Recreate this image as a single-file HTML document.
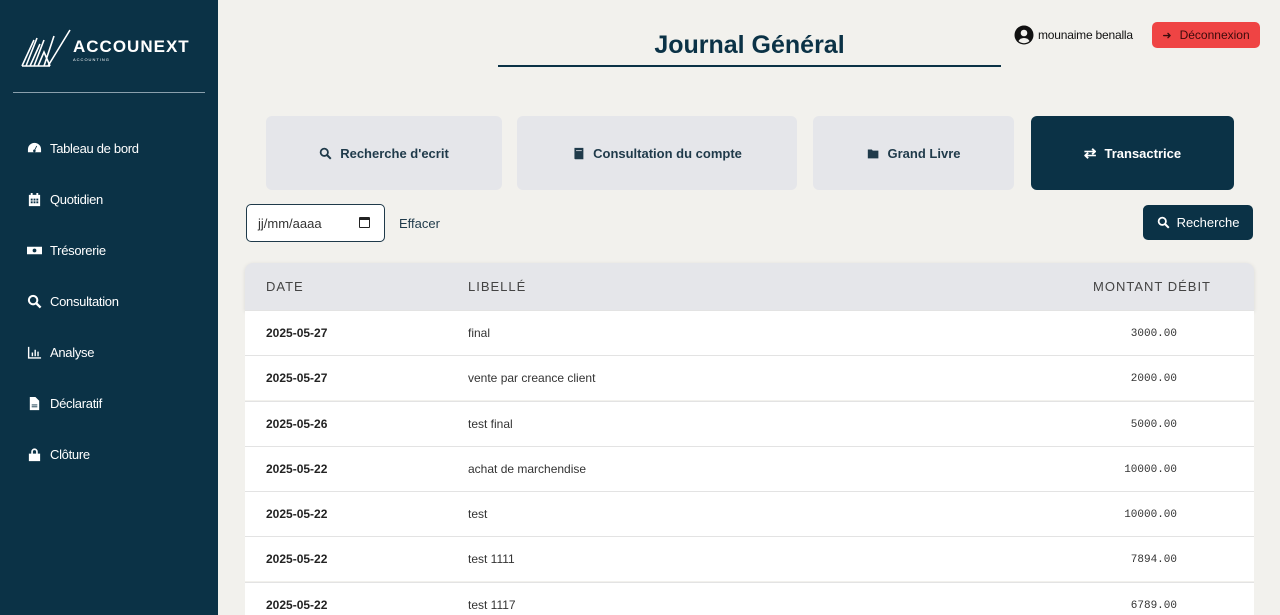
<!DOCTYPE html>
<html style="width:1280px;height:615px;overflow:hidden"><head><meta charset="utf-8"><style>
*{margin:0;padding:0;box-sizing:border-box}
body{width:1280px;height:615px;overflow:hidden;background:#f2f1ed;font-family:"Liberation Sans",sans-serif;position:relative}
.sb{position:absolute;left:0;top:0;width:218px;height:615px;background:#0b3246}
.abs{position:absolute}
.nav{position:absolute;left:27px;color:#fff;font-size:13px;display:flex;align-items:center;gap:8px;letter-spacing:-0.3px}
.nav svg{width:15px;height:15px;fill:#fff}
.tab{position:absolute;top:116px;height:74px;background:#e5e6ea;border-radius:6px;display:flex;align-items:center;justify-content:center;gap:8px;font-size:13px;font-weight:bold;color:#1f3a4a}
.tab svg{width:13px;height:13px;fill:#1f3a4a}
.row{position:absolute;left:245px;width:1009px;height:45px;background:#fff;border-top:1px solid #e3e3e3;font-size:12px;color:#333;overflow:hidden}
.row span{position:absolute;top:15px}
.d{left:21px;font-weight:bold;color:#222}
.l{left:223px}
.row .m{right:77px;top:17px;font-family:"Liberation Mono",monospace;font-size:11px}
</style></head><body>
<div class="sb">
 <svg class="abs" style="left:20px;top:26px" width="52" height="42" viewBox="0 0 52 42" fill="none" stroke="#fff" stroke-width="1.6"><path d="M2 40 L14 14 M6 40 L17 12 M10 40 L20 18 M14 40 L24 14 M18 40 L24 26 L30 40 M24 40 L34 10 M28 40 L50 4 M2 40 H30"/></svg>
 <div class="abs" style="left:73px;top:37px;color:#fff;font-weight:bold;font-size:17px;letter-spacing:1px">ACCOUNEXT</div>
 <div class="abs" style="left:73px;top:57px;color:#fff;font-size:4px;letter-spacing:1px">ACCOUNTING</div>
 <div class="abs" style="left:13px;top:92px;width:192px;height:1px;background:#8aa0ad"></div>
 <div class="nav" style="top:141px"><svg viewBox="0 0 16 16"><path d="M8 2a7 7 0 0 0-7 7v3h14V9a7 7 0 0 0-7-7zm0 10a1.5 1.5 0 1 1 0-3l2-4 .8.4-2 4A1.5 1.5 0 0 1 8 12z"/></svg>Tableau de bord</div>
 <div class="nav" style="top:192px"><svg viewBox="0 0 16 16"><path d="M2 3h12v12H2zM4 1h2v3H4zM10 1h2v3h-2z"/><path fill="#0b3246" d="M4 7h2v2H4zm3 0h2v2H7zm3 0h2v2h-2zM4 10h2v2H4zm3 0h2v2H7zm3 0h2v2h-2z"/></svg>Quotidien</div>
 <div class="nav" style="top:243px"><svg viewBox="0 0 16 16"><path d="M0 4h16v8H0z"/><circle cx="8" cy="8" r="2" fill="#0b3246"/></svg>Trésorerie</div>
 <div class="nav" style="top:294px"><svg viewBox="0 0 16 16"><circle cx="6.5" cy="6.5" r="4.5" fill="none" stroke="#fff" stroke-width="2.2"/><path d="M10 10l4.5 4.5" stroke="#fff" stroke-width="2.5"/></svg>Consultation</div>
 <div class="nav" style="top:345px"><svg viewBox="0 0 16 16"><path d="M1 2h1.5v11H15v1.5H1zM5 8h1.5v4H5zM8 5h1.5v7H8zM11 7h1.5v5H11z"/></svg>Analyse</div>
 <div class="nav" style="top:396px"><svg viewBox="0 0 16 16"><path d="M3 1h6l4 4v10H3z"/><path fill="#0b3246" d="M5 9h6v1H5zm0 2h6v1H5z"/></svg>Déclaratif</div>
 <div class="nav" style="top:447px"><svg viewBox="0 0 16 16"><path d="M2 7h12v8H2zM4.5 7V5a3.5 3.5 0 0 1 7 0v2h-1.8V5a1.7 1.7 0 0 0-3.4 0v2z"/></svg>Clôture</div>
</div>
<div class="abs" style="left:498px;top:31px;width:503px;text-align:center;font-size:25px;font-weight:bold;color:#0b3246">Journal Général</div>
<div class="abs" style="left:498px;top:65px;width:503px;height:2px;background:#0b3246"></div>
<svg class="abs" style="left:1014px;top:25px" width="20" height="20" viewBox="0 0 20 20"><circle cx="10" cy="10" r="9.5" fill="#111"/><circle cx="10" cy="8" r="3.3" fill="#f2f1ed"/><path d="M4.5 16a6 5 0 0 1 11 0a8 8 0 0 1-11 0z" fill="#f2f1ed"/></svg>
<div class="abs" style="left:1038px;top:28px;font-size:12px;color:#111;letter-spacing:-0.2px">mounaime benalla</div>
<div class="abs" style="left:1152px;top:22px;width:108px;height:26px;background:#ef4444;border-radius:5px;color:#3b0b0b;font-size:12px;display:flex;align-items:center;justify-content:center;gap:8px"><span style="font-size:11px">➜</span>Déconnexion</div>
<div class="tab" style="left:266px;width:236px"><svg viewBox="0 0 16 16"><circle cx="6.5" cy="6.5" r="4.5" fill="none" stroke="#1f3a4a" stroke-width="2.2"/><path d="M10 10l4.5 4.5" stroke="#1f3a4a" stroke-width="2.5"/></svg>Recherche d'ecrit</div>
<div class="tab" style="left:517px;width:280px"><svg viewBox="0 0 16 16"><path d="M3 1h11v14H4a1 1 0 0 1-1-1z"/><path fill="#e5e6ea" d="M5 4h7v1H5z"/></svg>Consultation du compte</div>
<div class="tab" style="left:813px;width:201px"><svg viewBox="0 0 16 16"><path d="M1 3h5l1 1.5h7V14H1z"/></svg>Grand Livre</div>
<div class="tab" style="left:1031px;width:203px;background:#0b3246;color:#fff"><span style="font-size:15px">⇄</span>Transactrice</div>
<div class="abs" style="left:246px;top:204px;width:139px;height:38px;border:1px solid #1f3a4a;border-radius:5px;background:#fff;font-size:13px;color:#333;padding:11px 0 0 11px">jj/mm/aaaa<span style="position:absolute;left:112px;top:12px;width:11px;height:11px;border:1.5px solid #222;border-top-width:3px;border-radius:1px"></span></div>
<div class="abs" style="left:399px;top:216px;font-size:13px;color:#1f3a4a">Effacer</div>
<div class="abs" style="left:1143px;top:205px;width:110px;height:35px;background:#0b3246;border-radius:5px;color:#fff;font-size:13px;display:flex;align-items:center;justify-content:center;gap:7px"><svg width="13" height="13" viewBox="0 0 16 16"><circle cx="6.5" cy="6.5" r="4.5" fill="none" stroke="#fff" stroke-width="2.2"/><path d="M10 10l4.5 4.5" stroke="#fff" stroke-width="2.5"/></svg>Recherche</div>
<div class="abs" style="left:245px;top:263px;width:1009px;height:48px;background:#e5e6ea;border-radius:8px 8px 0 0;font-size:13px;color:#444;letter-spacing:1px;box-shadow:0 1px 4px rgba(0,0,0,.1)">
 <span class="abs" style="left:21px;top:16px">DATE</span><span class="abs" style="left:223px;top:16px">LIBELLÉ</span><span class="abs" style="right:43px;top:16px">MONTANT DÉBIT</span></div>
<div class="row" style="top:310px"><span class="d">2025-05-27</span><span class="l">final</span><span class="m">3000.00</span></div>
<div class="row" style="top:355px"><span class="d">2025-05-27</span><span class="l">vente par creance client</span><span class="m">2000.00</span></div>
<div class="row" style="top:401px"><span class="d">2025-05-26</span><span class="l">test final</span><span class="m">5000.00</span></div>
<div class="row" style="top:446px"><span class="d">2025-05-22</span><span class="l">achat de marchendise</span><span class="m">10000.00</span></div>
<div class="row" style="top:491px"><span class="d">2025-05-22</span><span class="l">test</span><span class="m">10000.00</span></div>
<div class="row" style="top:536px"><span class="d">2025-05-22</span><span class="l">test 1111</span><span class="m">7894.00</span></div>
<div class="row" style="top:582px;height:33px"><span class="d">2025-05-22</span><span class="l">test 1117</span><span class="m">6789.00</span></div>
</body></html>
